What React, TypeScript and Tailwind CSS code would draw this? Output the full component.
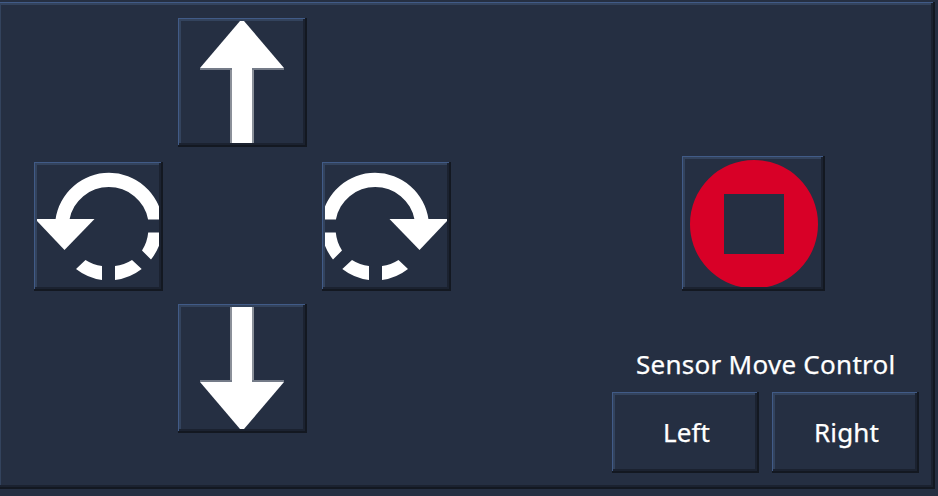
import type { ReactNode } from "react";

const bevel =
  "bg-[#252f42] shadow-[inset_-2px_-2px_#131821,inset_1px_1px_#415b87,inset_-4px_-4px_#1b2230,inset_3px_3px_#33435d]";

function IconButton({ label, className, children }: { label: string; className: string; children: ReactNode }) {
  return (
    <button aria-label={label} className={`block pt-[3px] pr-1 pb-1 pl-[3px] ${bevel} ${className}`}>
      {children}
    </button>
  );
}

function ArrowIcon({ down = false }: { down?: boolean }) {
  return (
    <svg viewBox="0 0 122 122" className={`block size-[122px] ${down ? "-scale-y-100" : ""}`}>
      <path d="M49 49h2v73h-2zM71 49h2v73h-2z" fill="#8b9099" />
      <path d="M19 47h84v2H19z" fill="#747b88" />
      <path d="M51 46h20v76H51z" fill="#fff" />
      <path d="M59 0h4L103 47H19z" fill="#fff" />
    </svg>
  );
}

function RotateIcon({ clockwise = false }: { clockwise?: boolean }) {
  return (
    <svg viewBox="0 0 122 122" className={`block size-[122px] ${clockwise ? "-scale-x-100" : ""}`}>
      <g fill="#fff">
        <path d="M18.5 56V54.5A54 54 0 0 1 125.5 54.5H111.1A40 40 0 0 0 32.5 54.5V56z" />
        <path d="M-2 54H57.5L27.5 85z" />
        <path d="M111.2 67.5H125.4A54 54 0 0 1 114 94.5L105 85.5A40 40 0 0 0 111.2 67.5z" />
        <path d="M95 95L104.7 104A54 54 0 0 1 78 115V101A40 40 0 0 0 95 95z" />
        <path d="M48.5 95L39 104A54 54 0 0 0 65 115V101A40 40 0 0 1 48.5 95z" />
      </g>
    </svg>
  );
}

function StopIcon() {
  return (
    <svg viewBox="0 0 136 128" className="block h-32 w-[136px]">
      <path
        fill="#d80027"
        fillRule="evenodd"
        d="M69 1A64 64 0 0 0 5 65A64 64 0 0 0 56 128H82A64 64 0 0 0 133 65A64 64 0 0 0 69 1zM39 35H99V95H39z"
      />
    </svg>
  );
}

function TextButton({ children }: { children: string }) {
  return (
    <button className={`flex h-[81px] w-[147px] items-center justify-center pb-px pl-0.5 text-[26px] leading-8 tracking-[0.15px] ${bevel}`}>
      {children}
    </button>
  );
}

export default function App() {
  return (
    <main className="h-[496px] w-[938px] overflow-hidden bg-[#252f42] pt-0.5 font-['Noto_Sans',sans-serif] text-white [-webkit-text-stroke:0.25px_white]">
      <section className={`-ml-0.5 flex h-[487px] w-[937px] justify-between pt-4 pr-4 pb-4 pl-9 ${bevel}`}>
        <div className="grid h-[415px] grid-cols-[129px_129px_129px] grid-rows-[144px_142px_129px] gap-x-[15px]">
          <IconButton label="Forward" className="col-start-2 size-[129px]">
            <ArrowIcon />
          </IconButton>
          <IconButton label="Rotate left" className="col-start-1 row-start-2 size-[129px]">
            <RotateIcon />
          </IconButton>
          <IconButton label="Rotate right" className="col-start-3 row-start-2 size-[129px]">
            <RotateIcon clockwise />
          </IconButton>
          <IconButton label="Backward" className="col-start-2 row-start-3 size-[129px]">
            <ArrowIcon down />
          </IconButton>
        </div>
        <div className="flex w-[307px] flex-col justify-between">
          <IconButton label="Stop" className="mt-[138px] ml-[70px] h-[135px] w-[143px]">
            <StopIcon />
          </IconButton>
          <div>
            <h2 className="mb-3 pl-6 text-[26px] leading-8 tracking-[0.27px] whitespace-nowrap">Sensor Move Control</h2>
            <div className="flex gap-[13px]">
              <TextButton>Left</TextButton>
              <TextButton>Right</TextButton>
            </div>
          </div>
        </div>
      </section>
    </main>
  );
}
